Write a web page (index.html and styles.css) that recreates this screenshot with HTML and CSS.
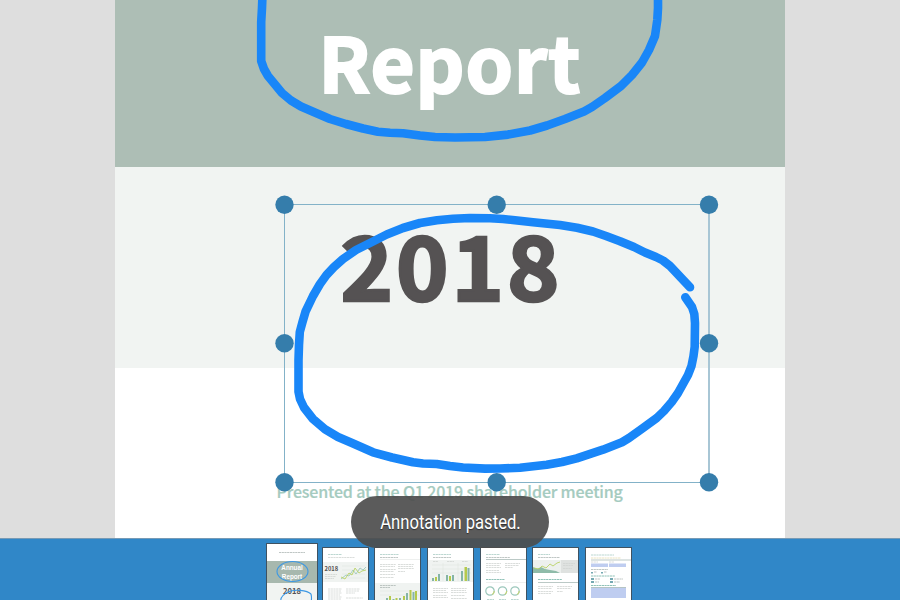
FILE: index.html
```html
<!DOCTYPE html>
<html lang="en">
<head>
<meta charset="utf-8">
<title>Annual Report</title>
<link rel="stylesheet" href="styles.css">
</head>
<body>
<main class="viewer">
  <article class="page">
    <header class="hero"><h1 class="hero-title">Report</h1></header>
    <section class="year-band"><p class="year">2018</p></section>
    <section class="summary"><p class="presented">Presented at the Q1 2019 shareholder meeting</p></section>
  </article>
  <svg class="ink-layer" viewBox="0 0 900 538" width="900" height="538">
    <g class="ink">
      <polyline points="262.5,-5 262,8 261.2,22 261.2,61 264,69 268,76 282,93 291,100.5 301,106.500 316,113 330,119 346,124 363,128.500 378,131.700 390,132.800 403,133.300 420,135.500 435,137 455,137.500 485,137 508,134.600 530,130.500 547,125.500 565,119 584,111.500 592,107 605,98 621,86 632,75 642,62.500 649,50 655,36 657.300,20 658,8 658,-5"/>
      <polyline points="690,287.3 670,266 663,260.500 656,257 645,252.500 634,247 620,241.200 606,236 593,231.500 577,227.800 560,225 533,222.300 515,220.300 503,219 490,218.300 470,218 453,218.800 437,220.300 420,223 403,228 386.7,234.500 370,243 356,250 343,259 334,267 326.500,275 320,284 313,296 305.500,311.700 302.500,322 299.800,332 299,345 298.500,360 298.500,391.700 300,399 304,407.500 313,419 325,429.300 338,437 352,443 373,452.300 392,457.500 413,462.300 423,463.500 436.700,464 450,466 463,467.500 485,468.600 500,468.500 520,467.700 546.700,464.700 562,462 576.700,458.300 603,449.700 622,442.200 629,438 643,428 656.700,418 664,411 671.700,402 678,393 683,384 688,375 691.500,366 693.500,356 694.700,346.700 695,323 694.300,314 692,307 685.300,297.300"/>
    </g>
    <g class="selection">
      <path class="edge" d="M284.500 204.500H709M284.500 204.500V482.500M284.500 482.500H709"/>
      <path class="edge-soft" d="M709 204.500V482.500"/>
      <circle cx="284.500" cy="204.700" r="9.200"/><circle cx="496.700" cy="204.700" r="9.200"/><circle cx="709" cy="204.700" r="9.200"/>
      <circle cx="284.500" cy="343.300" r="9.200"/><circle cx="709" cy="343.300" r="9.200"/>
      <circle cx="284.500" cy="482.200" r="9.200"/><circle cx="496.700" cy="482.200" r="9.200"/><circle cx="709" cy="482.200" r="9.200"/>
    </g>
  </svg>
</main>
<nav class="thumbs">
  <svg class="thumb current" viewBox="0 0 50 57" width="50" height="57">
    <path class="fine dark" d="M12 8.500H38"/>
    <path fill="#a7b8ae" d="M0 17H50V39H0z"/><path fill="#f1f4f2" d="M0 39H50V57H0z"/>
    <text class="cover" x="25" y="26">Annual</text><text class="cover" x="25" y="34.500">Report</text>
    <text class="mini-year" x="25" y="50">2018</text>
    <ellipse class="mini-ink" cx="25.500" cy="27.500" rx="15.500" ry="10"/>
    <path class="mini-ink" d="M44 50C40 46 27 45 21 48C15 51 13 54 14 58M44 50Q45 54 44 58"/>
  </svg>
  <svg class="thumb" viewBox="0 0 45 53" width="45" height="53">
    <path class="fine teal" d="M5 6.500H19"/><path class="fine" d="M5 9.500H32"/>
    <path fill="#f0f3f1" d="M0 14H45V34H0z"/><path class="rule" d="M19 18H42M19 22H42M19 26H42M19 30H42"/>
    <text class="mini-year small" x="1.500" y="22.500">2018</text>
    <path class="fine" d="M2 26.500H14M2 28.500H13M2 30.500H11"/>
    <path class="plot teal-line" d="M18 31L23 27L26 28L30 22L33 26L37 20L40 22L43 19"/>
    <path class="plot green-line" d="M18 29L22 31L26 25L29 27L32 20L36 25L39 23L43 22"/>
    <path class="fine" d="M5 41H19M5 43H18M5 45H19M5 47H17M5 49H19M5 51H18M23 41H37M23 43H36M23 45H32M23 50H40"/>
  </svg>
  <svg class="thumb" viewBox="0 0 45 53" width="45" height="53">
    <path class="fine teal" d="M5 6.500H24"/><path class="fine dark" d="M5 9.500H23"/><path class="rule" d="M5 11.500H45"/>
    <path class="fine" d="M5 16.500H21M5 18.500H20M5 21.500H21M5 23.500H19M5 26.500H20M5 29.500H19M23 16.500H39M23 18.500H38M23 20.500H39M23 23.500H30"/>
    <path fill="#f0f3f1" d="M0 35H45V53H0z"/><path class="fine dark" d="M5 37.500H21M5 39.500H15"/><path class="rule" d="M5 43H44M5 47H44"/>
    <path class="bar-teal" d="M11 50h2v3h-2zM17.500 51h2v2h-2zM24 50h2v3h-2zM31 45h2v8h-2zM37.500 44h2v9h-2z"/>
    <path class="bar-green" d="M14 48h2v5h-2zM20.500 50h2v3h-2zM28 48h2v5h-2zM34.500 42h2v11h-2zM40 43h2v10h-2z"/>
  </svg>
  <svg class="thumb" viewBox="0 0 45 53" width="45" height="53">
    <path class="fine teal" d="M5 6.500H23"/><path class="fine dark" d="M5 9.500H23"/>
    <path fill="#f0f3f1" d="M0 12H45V34H0z"/><path class="fine" d="M5 13.500H10M19 13.500H26M34 13.500H40"/>
    <path class="rule" d="M4 17H43M4 21H43M4 25H43M15 15V33M30 15V33"/>
    <path class="bar-teal" d="M4 30h2v3h-2zM10 26h2v7h-2zM18 27h2v6h-2zM24 27h2v6h-2zM33 23h2v10h-2zM39.500 20h2v13h-2z"/>
    <path class="bar-green" d="M7 29h2v4h-2zM21 28h2v5h-2zM36.500 19h2.500v14h-2.500z"/>
    <path class="fine" d="M5 40.500H20M5 42.500H18M5 44.500H20M5 47.500H19M5 49.500H20M23 40.500H39M23 42.500H38M23 44.500H39M23 47.500H37M23 50.500H39"/>
  </svg>
  <svg class="thumb" viewBox="0 0 45 53" width="45" height="53">
    <path class="fine teal" d="M5 6.500H19"/><path class="fine dark" d="M5 9.500H29"/><path class="rule strong" d="M5 11.500H45"/>
    <path class="fine" d="M5 15.500H20M5 17.500H19M5 19.500H20M5 22.500H18M5 24.500H20M24 15.500H39M24 17.500H38M24 19.500H32"/>
    <path class="fine dark teal" d="M5 31.500H24"/><path class="rule" d="M5 34.500H45"/>
    <g class="ring"><circle cx="9" cy="43" r="4.200"/><circle cx="21.500" cy="43" r="4.200"/><circle cx="34" cy="43" r="4.200"/></g>
    <g class="ring-part"><circle cx="9" cy="43" r="4.200"/><circle cx="21.500" cy="43" r="4.200"/><circle cx="34" cy="43" r="4.200"/></g>
    <path class="fine teal" d="M6 51.500H13M18 51.500H25M30 51.500H38"/>
  </svg>
  <svg class="thumb" viewBox="0 0 45 53" width="45" height="53">
    <path class="fine teal" d="M5 6.500H17"/><path class="fine dark" d="M5 9.500H27"/>
    <path fill="#edf0ee" d="M0 12H28V25H0z"/><path fill="#dfe2e0" d="M28 12H45V25H28z"/>
    <path fill="#8fbba9" d="M0 19L4 21L8 19L12 21L17 22L23 23L27 25H0z"/>
    <path class="plot green-line" d="M1 20L6 21L9 18L13 20L17 16L20 18L24 15L27 14"/>
    <path class="fine" d="M30 15.500H42M30 17.500H40M30 20.500H39"/>
    <path class="fine dark teal" d="M5 31.500H29"/><path class="rule strong" d="M5 34.500H45"/>
    <path class="fine" d="M5 38.500H20M5 40.500H19M5 43.500H20M5 45.500H18M24 38.500H39M24 40.500H38M24 43.500H30"/>
  </svg>
  <svg class="thumb" viewBox="0 0 45 53" width="45" height="53">
    <path class="fine teal" d="M5 7H28"/><path class="fine gold" d="M5 10H35"/><path class="rule strong" d="M5 12H45"/>
    <path class="fine" d="M5 14H12M23 14H28"/><path fill="#bfcdf0" d="M5 15.500H22V19H5zM23 15.500H40V19H23zM5 39.500H40V50H5z"/>
    <path class="fine dark" d="M5 21.500H22M8 24H11M18 24H21M9 31H14M28 31H37M9 34H13M28 34H34"/>
    <path class="fine dark teal" d="M5 28H29M5 37.500H30"/><path fill="#75a9b2" d="M5 30h3v2h-3zM5 33h3v2h-3zM24 30h3v2h-3zM24 33h3v2h-3zM5 24h2v1.500h-2zM15 24h2v1.500h-2z"/>
    <path class="rule strong" d="M5 39.500H40"/>
  </svg>
</nav>
<div class="toast" role="status"><span class="toast-text">Annotation pasted.</span></div>
</body>
</html>
```
FILE: styles.css
```css
* { box-sizing: border-box; }
body {
  margin: 0;
  width: 900px;
  height: 600px;
  overflow: hidden;
  display: flex;
  flex-direction: column;
  background: #dedede;
  font-family: "Noto Sans CJK SC", "Open Sans", sans-serif;
}
h1, p { margin: 0; }
.viewer {
  position: relative;
  height: 538px;
  display: flex;
  justify-content: center;
}
.page {
  width: 670px;
  height: 538px;
  display: flex;
  flex-direction: column;
  background: #fff;
}
.hero {
  height: 167px;
  padding: 14.5px 0 0 203.5px;
  background: #adbeb5;
  overflow: hidden;
}
.hero-title {
  color: #fff;
  font-size: 76px;
  font-weight: 700;
  line-height: 90px;
  letter-spacing: 1px;
  -webkit-text-stroke: 2.2px #fff;
  white-space: nowrap;
}
.year-band {
  height: 200.5px;
  padding: 46px 0 0 225.5px;
  background: #f1f4f2;
}
.year {
  color: #555253;
  font-size: 89px;
  font-weight: 700;
  line-height: 100px;
  letter-spacing: 3px;
  -webkit-text-stroke: 2.6px #555253;
  white-space: nowrap;
}
.summary { padding: 111.5px 0 0 161.5px; }
.presented {
  color: #a5cbbf;
  font-size: 16px;
  font-weight: 500;
  line-height: 24px;
  letter-spacing: -.16px;
  -webkit-text-stroke: .2px #a5cbbf;
  white-space: nowrap;
}
.ink-layer { position: absolute; inset: 0; }
.ink {
  fill: none;
  stroke: #1986f8;
  stroke-width: 8.6px;
  stroke-linecap: round;
  stroke-linejoin: round;
}
.selection circle { fill: #357dab; }
.edge { fill: none; stroke: #83b2c8; stroke-width: 1px; }
.edge-soft { fill: none; stroke: #a8c6d5; stroke-width: 2px; }
.thumbs {
  height: 62px;
  padding-right: 2px;
  display: flex;
  justify-content: center;
  align-items: flex-end;
  gap: 5.6px;
  overflow: hidden;
  background: #3087c8;
  border-top: 1px solid #779ab5;
}
.thumb {
  flex: none;
  box-sizing: content-box;
  margin-bottom: -1px;
  background: #fff;
  border: 1px solid #3f5261;
  border-bottom: 0;
  border-radius: 1px 1px 0 0;
}
.thumb.current { margin-right: -2px; }
.fine { fill: none; stroke: #d0d4d2; stroke-width: .8px; stroke-dasharray: 2.2 .5; }
.fine.dark { stroke: #aeb7b5; }
.fine.teal { stroke: #a9cdc5; }
.fine.dark.teal { stroke: #74b3a6; }
.fine.gold { stroke: #e5dcb1; }
.rule { fill: none; stroke: #dce1df; stroke-width: .5px; }
.rule.strong { stroke: #a9bbb7; stroke-width: .8px; }
.cover { fill: #fff; font: 700 6.3px "Liberation Sans", sans-serif; text-anchor: middle; }
.mini-year { fill: #555253; font-size: 7.6px; font-weight: 700; text-anchor: middle; }
.mini-year.small { font-size: 5.8px; text-anchor: start; }
.mini-ink { fill: none; stroke: #3c98e4; stroke-width: 1.1px; }
.plot { fill: none; stroke-width: .8px; }
.teal-line { stroke: #94c3b8; }
.green-line { stroke: #b4cf55; }
.bar-teal { fill: #85b5a6; }
.bar-green { fill: #b5ca4c; }
.ring { fill: none; stroke: #9bc7bb; stroke-width: 1.2px; }
.ring-part { fill: none; stroke: #c3d477; stroke-width: 1.2px; stroke-dasharray: 4 22; }
.toast {
  position: absolute;
  left: 351px;
  top: 496px;
  width: 198px;
  height: 52px;
  display: flex;
  align-items: center;
  justify-content: center;
  border-radius: 26px;
  background: rgba(77, 77, 77, .923);
}
.toast-text {
  flex: none;
  color: #fff;
  font: 400 20px/24px Roboto, sans-serif;
  white-space: nowrap;
  transform: scaleX(.832);
  text-shadow: 0 1px 1px rgba(0, 0, 0, .5);
}
```
